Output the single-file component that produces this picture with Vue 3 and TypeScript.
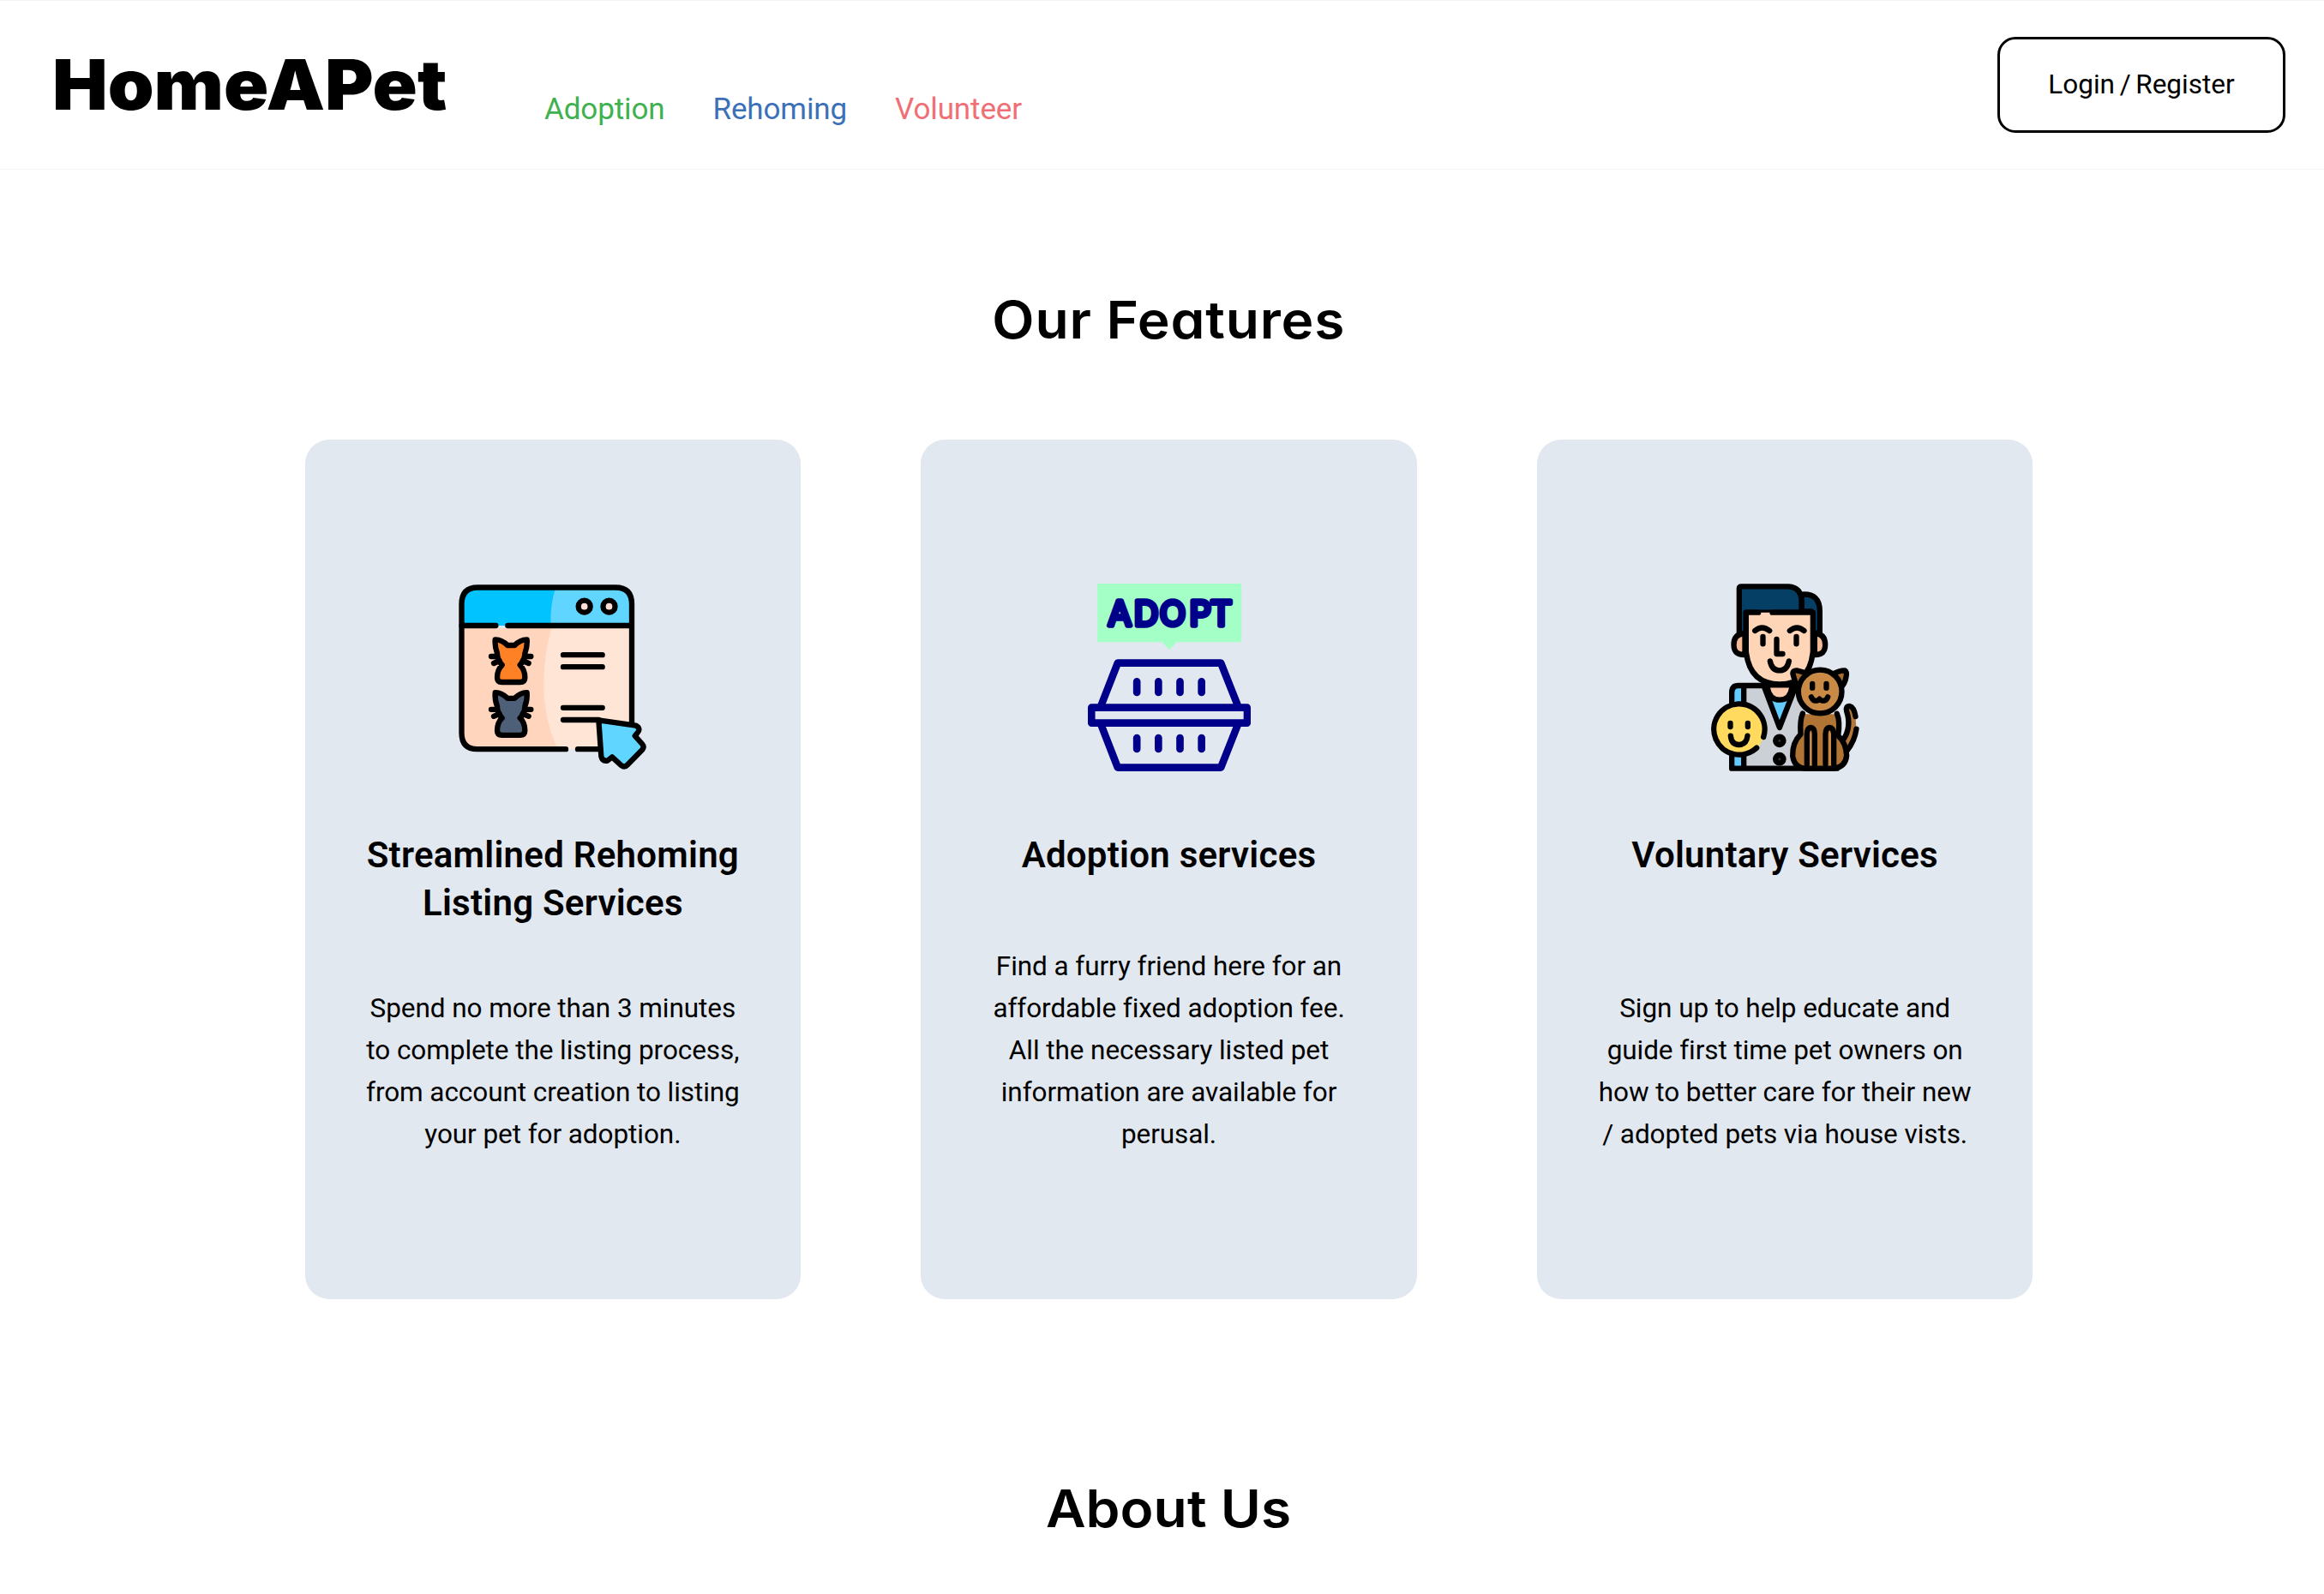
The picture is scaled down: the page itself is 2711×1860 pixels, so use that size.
<script setup lang="ts">
interface NavLink {
  label: string
  tone: string
}
interface Feature {
  icon: 'listing' | 'adopt' | 'volunteer'
  title: string
  text: string
}

const links: NavLink[] = [
  { label: 'Adoption', tone: 'green' },
  { label: 'Rehoming', tone: 'blue' },
  { label: 'Volunteer', tone: 'coral' },
]

const features: Feature[] = [
  {
    icon: 'listing',
    title: 'Streamlined Rehoming\nListing Services',
    text: 'Spend no more than 3 minutes\nto complete the listing process,\nfrom account creation to listing\nyour pet for adoption.',
  },
  {
    icon: 'adopt',
    title: 'Adoption services',
    text: 'Find a furry friend here for an\naffordable fixed adoption fee.\nAll the necessary listed pet\ninformation are available for\nperusal.',
  },
  {
    icon: 'volunteer',
    title: 'Voluntary Services',
    text: 'Sign up to help educate and\nguide first time pet owners on\nhow to better care for their new\n/ adopted pets via house vists.',
  },
]

const cats = [
  { y: 0, fill: '#ff8126' },
  { y: 185.5, fill: '#4e5f78' },
]
const slots = [227, 302.5, 378, 453.5]
</script>

<template>
  <div class="page">
    <header class="header">
      <div class="logo"><span class="logo-text">HomeAPet</span></div>
      <nav class="nav">
        <a v-for="link in links" :key="link.label" :class="['link', link.tone]">{{ link.label }}</a>
      </nav>
      <button class="login">Login / Register</button>
    </header>

    <main class="main">
      <h1 class="heading features-heading">Our Features</h1>
      <section class="cards">
        <article v-for="f in features" :key="f.title" class="card">
          <svg v-if="f.icon === 'listing'" class="icon" viewBox="45 30 660 660" fill="none" stroke="#000" stroke-width="19" stroke-linecap="round" stroke-linejoin="round">
            <g stroke="none">
              <path d="M56 180V105Q56 47 110 47H596Q651 47 651 105V180Z" fill="#00c3ff" />
              <path d="M385 47H596Q651 47 651 105V180H367Q365 100 385 47Z" fill="#5fd5ff" />
              <path d="M56 180H651V612H110Q56 612 56 556Z" fill="#ffd5bd" />
              <path d="M370 188H651V612H392Q343 510 343 385Q343 280 370 188Z" fill="#ffe5d5" />
              <path d="M178 180H212V189H178Z" fill="#d8eaf2" />
            </g>
            <path d="M420 612.500H110Q55.500 612.500 55.500 556V105Q55.500 46.500 112 46.500H594Q651 46.500 651 105V530M462 612.500H545" />
            <path d="M56 180H175M217 180H650" />
            <circle cx="485" cy="113" r="21" fill="#ffdcd5" />
            <circle cx="571.500" cy="113" r="21" fill="#ffdcd5" />
            <path d="M411 282.500H548M411 324.500H548M411 467.500H548M411 510H535" />
            <g v-for="cat in cats" :key="cat.y" :transform="`translate(0 ${cat.y})`">
              <path d="M173 229Q171 254 180 277Q180 300 197 318Q180 335 180 362Q180 378 197 378H260Q277 378 277 362Q277 335 260 318Q277 300 277 277Q286 254 284 229Q262 228 241 249H216Q195 228 173 229Z" :fill="cat.fill" />
              <path d="M159 288H176M168 312L188 303M298 288H281M290 312L269 303" />
            </g>
            <path d="M535 511L665 530Q684 540 671 555L662 566L687 594Q696 604 688 614L635 668Q625 678 615 670L582 640L566 653Q548 656 544 638Z" fill="#5fd5ff" />
          </svg>

          <svg v-else-if="f.icon === 'adopt'" class="icon" viewBox="10.500 30 660 660" fill="none" stroke="#00008b" stroke-width="26" stroke-linecap="round" stroke-linejoin="round">
            <path d="M89 33H593V238H366L341 264L315 238H89Z" fill="#a4ffc6" stroke="none" />
            <text class="adopt-text" y="180" x="126 217 307 411 484">ADOPT</text>
            <path d="M101 462L160 311H521L581 462M101 525L160 677H521L581 525" />
            <path d="M68.500 467H612.500V521H68.500Z" />
            <path d="M82 480H600V507H82Z" fill="#e2e8f0" stroke="none" />
            <path v-for="x in slots" :key="x" :d="`M${x} 376V414M${x} 573V612`" />
          </svg>

          <svg v-else class="icon" viewBox="-22.500 30 660 660" fill="none" stroke="#000" stroke-width="19" stroke-linecap="round" stroke-linejoin="round">
            <!-- coat and shirt -->
            <path d="M122 680V415Q122 390 147 390H380V680Z" fill="#cbcfd6" stroke="none" />
            <path d="M122 680V415Q122 398 138 398H164V680Z" fill="#62ccff" stroke="none" />
            <path d="M236 396H344L289 537Z" fill="#62ccff" />
            <path d="M247 388V398Q254 440 290 440Q326 440 332 398V388Z" fill="#ffc8a8" />
            <path d="M240 390H145Q122 390 122 415V455M122 635V680H490M164 395V455M164 635V680" />
            <circle cx="289" cy="583" r="14" fill="#333" />
            <circle cx="289" cy="647" r="14" fill="#333" />
            <!-- head -->
            <path d="M366 71Q430 65 430 130V205H400V130H366Z" fill="#063f66" />
            <path d="M148 210V50Q148 43 156 43H320Q366 46 366 95V134H172V210Z" fill="#063f66" />
            <path d="M168 208Q129 208 129 247Q129 284 168 282ZM412 208Q449 208 449 247Q449 284 412 282Z" fill="#f4b995" />
            <path d="M172 134H406V270Q403 385 290 385Q180 385 172 270Z" fill="#ffd5b8" stroke="none" />
            <path d="M215 134H172V270Q184 385 290 385Q396 385 406 270V134H264" />
            <path d="M203 198Q228 177 254 198M325 198Q350 177 375 198M231 219V244M348 219V244M279 228V279H300M256 304Q262 337 289 337Q316 337 322 304" />
            <!-- badge -->
            <circle cx="147" cy="547" r="88" fill="#ffda5f" stroke="none" />
            <path d="M233 570A89 89 0 1 0 209 608" />
            <path d="M117 522V534M178 522V534M118 566Q121 597 147 597Q173 597 177 566" />
            <!-- cat -->
            <path d="M505 590Q545 530 523 475Q520 461 535 461Q548 464 555 498L558 542Q550 590 525 615Z" fill="#b5783a" stroke="none" />
            <path d="M365 490H497L505 585Q530 620 520 650Q510 680 480 680H375Q335 670 335 635Q335 590 365 560Z" fill="#b07434" stroke="none" />
            <path d="M383 545H413V680H383ZM450 545H480V680H450Z" fill="#c98a45" stroke="none" />
            <path d="M370 488Q360 510 363 560Q333 590 335 637Q342 680 382 680H480Q520 675 524 635Q522 590 494 565Q502 515 490 488" />
            <path d="M385 665V560Q386 538 399 537Q411 538 412 560V665M450 665V560Q451 538 464 537Q477 538 479 560V665" />
            <path d="M555 498Q550 466 535 462Q519 462 524 480Q542 535 512 580M558 542Q552 585 525 618" />
            <path d="M350 398L336 350Q334 336 350 337Q370 340 390 352ZM474 350Q500 336 518 337Q526 342 522 360Q518 385 502 398Z" fill="#a66c30" />
            <circle cx="431" cy="411" r="76" fill="#c98a45" />
            <path d="M404 384V398M453 384V398M400 430Q406 444 416 443Q424 443 429 437Q434 443 443 443Q453 443 458 430" />
          </svg>

          <h2 class="card-title">{{ f.title }}</h2>
          <p class="card-text">{{ f.text }}</p>
        </article>
      </section>
      <h1 class="heading">About Us</h1>
    </main>
  </div>
</template>

<style>
html,
body {
  margin: 0;
  background: #fff;
  overflow: hidden;
}
</style>

<style scoped>
.page {
  box-sizing: border-box;
  height: 1860px;
  overflow: hidden;
  background: #fff;
  color: #000;
  font-family: Roboto, "Liberation Sans", sans-serif;
}
.header {
  box-sizing: border-box;
  height: 198px;
  display: flex;
  align-items: center;
  padding: 0 45px 0 61px;
  border-top: 1px solid #f3f4f6;
  border-bottom: 1px solid #f3f4f6;
}
.logo {
  width: 574px;
  font: 900 81px/84px Inter, sans-serif;
  letter-spacing: 0;
}
.logo-text {
  display: inline-block;
  transform: scaleX(1.065);
  transform-origin: left;
}
.nav {
  display: flex;
  gap: 56px;
  padding-top: 56px;
}
.link {
  font-size: 35px;
  line-height: 49px;
  letter-spacing: -0.12px;
}
.green { color: #3fb14f; }
.blue { color: #3c70b8; }
.coral { color: #f06f76; }
.login {
  box-sizing: border-box;
  width: 336px;
  height: 112px;
  margin-left: auto;
  padding: 0 0 2px;
  border: 3px solid #000;
  border-radius: 21px;
  background: #fff;
  color: #000;
  font: 400 31.5px/49px Roboto, sans-serif;
  word-spacing: -2.2px;
}
.main {
  display: flex;
  flex-direction: column;
  align-items: center;
  padding: 140px 0 0 16px;
}
.heading {
  margin: 0;
  font: 600 60.5px/70px Inter, sans-serif;
  font-feature-settings: "cv11";
  transform: scaleX(1.06);
}
.features-heading {
  margin-bottom: 105px;
  letter-spacing: 0.7px;
}
.cards {
  display: flex;
  gap: 140px;
  margin-bottom: 209px;
}
.card {
  box-sizing: border-box;
  width: 578.67px;
  height: 1003px;
  padding: 167px 0 168px;
  display: flex;
  flex-direction: column;
  align-items: center;
  border-radius: 28px;
  background: #e2e8f0;
  text-align: center;
}
.icon {
  width: 220px;
  height: 220px;
  flex: none;
}
.adopt-text {
  font: 400 119px Inter, sans-serif;
  fill: #00008b;
  stroke-width: 16px;
}
.card-title {
  margin: 70px 0 0;
  font-size: 42px;
  line-height: 56px;
  font-weight: 600;
  letter-spacing: 0.25px;
  white-space: pre-line;
}
.card-text {
  margin: auto 0 0;
  font-size: 31.5px;
  line-height: 49px;
  letter-spacing: -0.07px;
  white-space: pre-line;
}
</style>
